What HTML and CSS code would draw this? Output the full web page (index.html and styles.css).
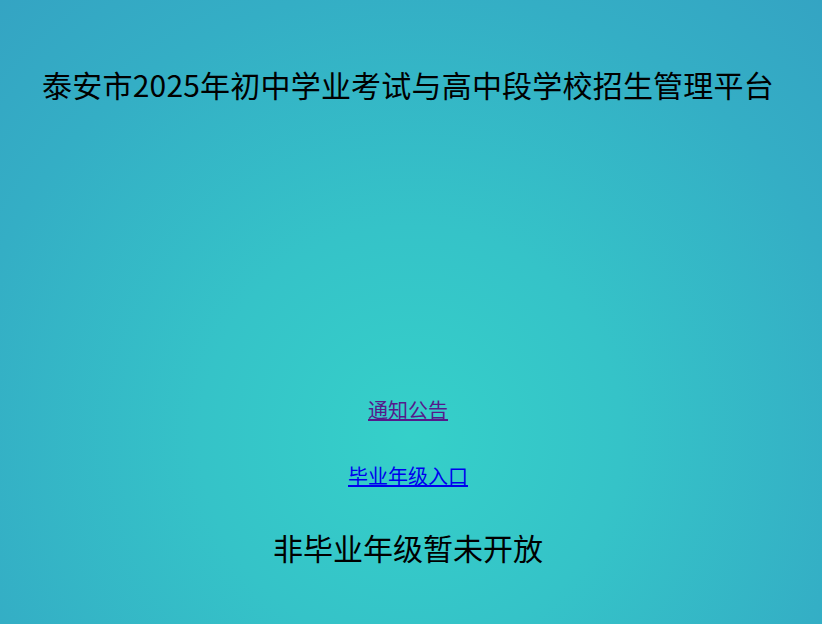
FILE: index.html
```html
<!DOCTYPE html>
<html lang="zh-CN">
<head>
<meta charset="utf-8">
<title>泰安市2025年初中学业考试与高中段学校招生管理平台</title>
<link rel="stylesheet" href="styles.css">
</head>
<body>
<div class="page">
  <h1 class="title">泰安市2025年初中学业考试与高中段学校招生管理平台</h1>
  <div class="links">
    <a class="link visited" href="#notice">通知公告</a>
    <a class="link" href="#grad">毕业年级入口</a>
  </div>
  <p class="closed">非毕业年级暂未开放</p>
</div>
</body>
</html>
```
FILE: styles.css
```css
html, body {
  margin: 0;
  padding: 0;
  height: 100%;
}
body {
  background: radial-gradient(circle at 50% 70%, #35d0c9 0%, #35c3c8 35%, #34aec5 75%, #34a4c3 100%);
  font-family: "Noto Sans CJK SC", "DejaVu Sans", sans-serif;
  color: #000;
}
.page {
  display: flex;
  flex-direction: column;
  align-items: center;
  text-align: center;
  padding-right: 6px;
}
.title {
  margin: 62px 0 0;
  font-size: 30px;
  font-weight: normal;
  line-height: 44px;
  letter-spacing: 0.2px;
}
.links {
  margin-top: 290px;
  display: flex;
  flex-direction: column;
  align-items: center;
  gap: 38px;
}
.link {
  font-size: 20px;
  line-height: 28px;
  color: #0000ee;
}
.link.visited {
  color: #551a8b;
}
.closed {
  margin: 35px 0 0;
  font-size: 30px;
  line-height: 44px;
}
```
